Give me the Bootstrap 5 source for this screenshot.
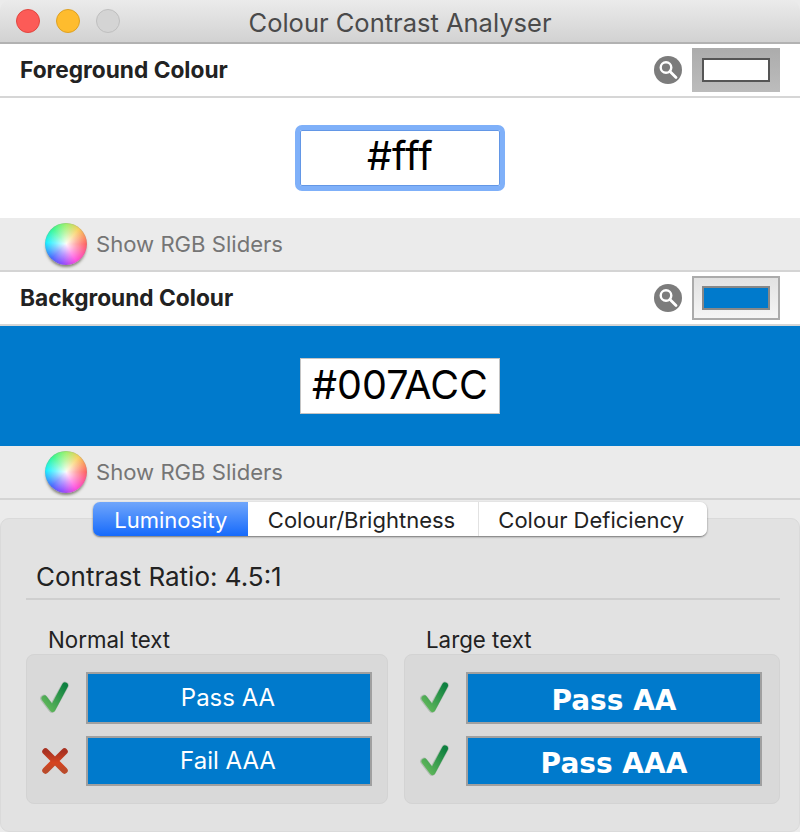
<!DOCTYPE html>
<html lang="en"><head><meta charset="utf-8"><title>Colour Contrast Analyser</title>
<link href="https://cdn.jsdelivr.net/npm/bootstrap@5.3.0/dist/css/bootstrap.min.css" rel="stylesheet">
<style>
html,body{height:832px;overflow:hidden}
body{font-family:Inter,"Liberation Sans",sans-serif;background:#ebebeb;color:#222}
.titlebar{height:44px;background:linear-gradient(#ebebeb,#d2d2d2);border-bottom:2px solid #b2b2b2;border-radius:10px 10px 0 0;padding-left:16px}
.light{width:24px;height:24px;border-radius:50%;border:1px solid}
.l-red{background:#fc5b57;border-color:#e2463f}
.l-yel{background:#febc2e;border-color:#dea123}
.l-off{background:#d4d4d4;border-color:#bfbfbf}
.win-title{font-size:25.500px;color:#4a4a4a;line-height:46px;left:0;right:0;top:0}
.head-row{height:54px;background:#fff;border-bottom:2px solid #d6d6d6;padding:0 20px}
.head-label{font-size:22.700px;font-weight:700;color:#222}
.mag{width:28px;height:28px;margin-right:2px}
.well-swatch{width:88px;height:44px}
.well-on{background:linear-gradient(#acacac,#bcbcbc)}
.well-off{background:linear-gradient(#e2e2e2,#f5f5f5);border:2px solid #ababab}
.swatch-core{width:68px;height:24px}
.core-w{background:#fff;border:2px solid #555}
.core-b{background:#007acc;border:2px solid #888}
.entry-zone{height:120px}
.zone-w{background:#fff}
.zone-b{background:#007acc}
.hex-focus{width:210px;height:66px;padding-bottom:3px;background:#fff;border:solid #7fb0f9;border-width:5px;border-radius:7px;box-shadow:inset 0 0 0 1px #6397e6}
.hex-plain{width:200px;height:56px;padding-bottom:1px;background:#fff;border:1px solid #c4c4c4}
.hex-text{font-family:Inter,"Liberation Sans",sans-serif;font-size:39.500px;color:#000;line-height:1}
.slider-row{height:54px;border-bottom:2px solid #d4d4d4;padding-left:45px}
.wheel{width:42px;height:42px;border-radius:50%;background:radial-gradient(circle,rgba(255,255,255,.95) 0,rgba(255,255,255,.4) 35%,rgba(255,255,255,0) 65%),conic-gradient(from 0deg,#a0f070,#f8d060 40deg,#ff6868 90deg,#ff50e0 150deg,#9050ff 190deg,#4c6cff 225deg,#20f0ff 275deg,#40f890 320deg,#a0f070);box-shadow:0 3px 3px -1px rgba(60,60,40,.6),inset 0 0 1px rgba(90,90,90,.8)}
.slider-label{font-size:22.100px;color:#757575;margin-left:9px;padding-top:2px}
.tabs-holder{height:36px;margin-top:2px;z-index:2}
.tabs-group{width:614px;height:34px;border-radius:7px;box-shadow:0 1px 2px rgba(0,0,0,.5)}
.tab-btn{font-size:22px;line-height:1;padding:1px 0 0;border:0;border-radius:7px;color:#222;background:#fff;flex:none;height:34px}
.tab-btn:hover{background:#fff;color:#222}
.tab-on,.tab-on:hover{width:155px;color:#fff;background:linear-gradient(#70a6fb,#166afb)}
.tab-mid{width:232px;padding-right:3px;border-right:2px solid #e2e2e2}
.tab-end{width:227px;padding-right:4px}
.panel-box{height:314px;margin-top:-20px;background:#e2e2e2;border:1px solid #dadada;border-radius:9px;padding:37px 19px 0 25px}
.ratio-line{font-size:26px;line-height:42px;padding-left:10px;height:44px;border-bottom:2px solid #cfcfcf;color:#222}
.cols-wrap{margin-top:26px;gap:16px}
.col-left{width:362px}
.col-right{width:376px}
.col-cap{font-size:22.300px;line-height:28px;color:#222}
.cap-l{padding-left:22px}
.group-box{height:150px;background:#d9d9d9;border:1px solid #d3d3d3;border-radius:8px;padding-top:17px;gap:12px}
.res-row{height:52px;padding-left:13px}
.res-row+.res-row{height:50px}
.col-right .res-row{padding-left:15px}
.res-icon{width:30px;height:36px;filter:blur(.4px)}
.res-bar{height:100%;background:#007acc;border:2px solid #a0a0a0;color:#fff}
.bar-l{width:286px;margin-left:16px;padding-right:2px;font-size:24px}
.bar-r{width:296px;margin-left:16px;padding-top:5px;font-family:"DejaVu Sans",Verdana,sans-serif;font-weight:700;font-size:28px}
</style></head>
<body>
<svg width="0" height="0" class="d-block">
<defs>
<linearGradient id="gk" x1="1" y1="0" x2="0" y2="1"><stop offset="0" stop-color="#0e8040"/><stop offset="1" stop-color="#66bb5c"/></linearGradient>
<linearGradient id="gx" x1="0" y1="0" x2="0" y2="1"><stop offset="0" stop-color="#a83222"/><stop offset=".6" stop-color="#d6441f"/><stop offset="1" stop-color="#bb4a2a"/></linearGradient>
<symbol id="ic-check" viewBox="0 0 30 36"><path d="M4 18.500 L12 29 L25 5.500" fill="none" stroke="#7d9a80" stroke-width="7.500" stroke-linecap="round" stroke-linejoin="round" opacity=".45"/><path d="M4.500 18.500 L12.500 29 L25 5.500" fill="none" stroke="url(#gk)" stroke-width="6" stroke-linecap="round" stroke-linejoin="round"/></symbol>
<symbol id="ic-cross" viewBox="0 0 30 36"><path d="M5.500 8.500 L24.500 27.500 M24.500 8.500 L5.500 27.500" fill="none" stroke="url(#gx)" stroke-width="6.500" stroke-linecap="round"/></symbol>
<symbol id="ic-mag" viewBox="0 0 28 28"><circle cx="14" cy="14" r="14" fill="#7c7c7c"/><circle cx="12" cy="11.500" r="5.300" fill="none" stroke="#fff" stroke-width="2.400"/><path d="M16 15.500 L22 21.500" stroke="#fff" stroke-width="2.800" stroke-linecap="round"/></symbol>
</defs>
</svg>
<div class="position-relative titlebar d-flex align-items-center gap-3">
<span class="light l-red"></span><span class="light l-yel"></span><span class="light l-off"></span>
<div class="win-title position-absolute text-center">Colour Contrast Analyser</div>
</div>
<div class="head-row d-flex align-items-center justify-content-between">
<span class="head-label">Foreground Colour</span>
<div class="d-flex align-items-center gap-2"><svg class="mag"><use href="#ic-mag"/></svg><div class="well-swatch well-on d-flex align-items-center justify-content-center"><div class="swatch-core core-w"></div></div></div>
</div>
<div class="entry-zone zone-w d-flex align-items-center justify-content-center"><div class="hex-focus d-flex align-items-center justify-content-center"><span class="hex-text">#fff</span></div></div>
<div class="slider-row d-flex align-items-center"><span class="wheel"></span><span class="slider-label">Show RGB Sliders</span></div>
<div class="head-row d-flex align-items-center justify-content-between">
<span class="head-label">Background Colour</span>
<div class="d-flex align-items-center gap-2"><svg class="mag"><use href="#ic-mag"/></svg><div class="well-swatch well-off d-flex align-items-center justify-content-center"><div class="swatch-core core-b"></div></div></div>
</div>
<div class="entry-zone zone-b d-flex align-items-center justify-content-center"><div class="hex-plain d-flex align-items-center justify-content-center"><span class="hex-text">#007ACC</span></div></div>
<div class="slider-row d-flex align-items-center"><span class="wheel"></span><span class="slider-label">Show RGB Sliders</span></div>
<div class="tabs-holder position-relative d-flex justify-content-center">
<div class="btn-group tabs-group" role="group">
<button type="button" class="btn tab-btn tab-on">Luminosity</button>
<button type="button" class="btn tab-btn tab-mid">Colour/Brightness</button>
<button type="button" class="btn tab-btn tab-end">Colour Deficiency</button>
</div></div>
<div class="panel-box">
<div class="ratio-line">Contrast Ratio: 4.5:1</div>
<div class="cols-wrap d-flex">
<div class="col-left">
<div class="col-cap cap-l">Normal text</div>
<div class="group-box d-flex flex-column">
<div class="res-row d-flex align-items-center"><svg class="res-icon"><use href="#ic-check"/></svg><div class="res-bar bar-l d-flex align-items-center justify-content-center">Pass AA</div></div>
<div class="res-row d-flex align-items-center"><svg class="res-icon"><use href="#ic-cross"/></svg><div class="res-bar bar-l d-flex align-items-center justify-content-center">Fail AAA</div></div>
</div></div>
<div class="col-right">
<div class="col-cap cap-l">Large text</div>
<div class="group-box d-flex flex-column">
<div class="res-row d-flex align-items-center"><svg class="res-icon"><use href="#ic-check"/></svg><div class="res-bar bar-r d-flex align-items-center justify-content-center">Pass AA</div></div>
<div class="res-row d-flex align-items-center"><svg class="res-icon"><use href="#ic-check"/></svg><div class="res-bar bar-r d-flex align-items-center justify-content-center">Pass AAA</div></div>
</div></div>
</div></div>
<script src="https://cdn.jsdelivr.net/npm/bootstrap@5.3.0/dist/js/bootstrap.bundle.min.js"></script>
</body></html>
